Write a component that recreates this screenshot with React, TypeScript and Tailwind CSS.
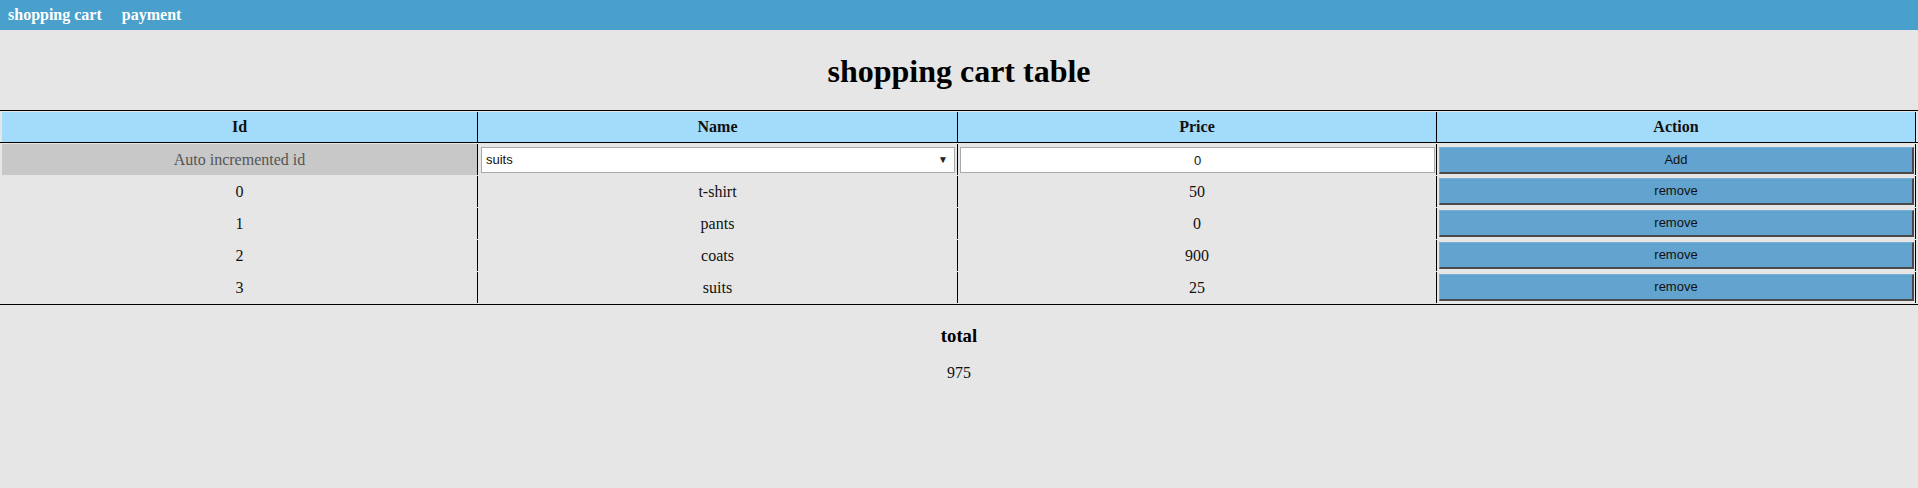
import React from "react";

const rows = [
  { id: 0, name: "t-shirt", price: 50 },
  { id: 1, name: "pants", price: 0 },
  { id: 2, name: "coats", price: 900 },
  { id: 3, name: "suits", price: 25 },
];

function ActionButton({ label }: { label: string }) {
  return (
    <button
      type="button"
      className="block w-full h-[27px] pb-[2px] bg-[#62a4cf] border-t border-l border-t-[#78b2d8] border-l-[#78b2d8] border-r-2 border-b-2 border-r-[#4a4a4a] border-b-[#4a4a4a] text-[13px] leading-[15px] text-[#111] font-['Liberation_Sans',Arial,sans-serif]"
    >
      {label}
    </button>
  );
}

const cols = "grid grid-cols-[476px_480px_479px_479px]";

export default function App() {
  return (
    <div className="min-h-screen bg-[#e6e6e6] font-['Liberation_Serif','Times_New_Roman',serif] text-[#111]">
      <nav className="h-[30px] bg-[#4aa0cc] flex items-center pl-2 gap-[20px] text-white font-bold text-[16px]">
        <a href="#" className="text-white">shopping cart</a>
        <a href="#" className="text-white">payment</a>
      </nav>

      <div className="h-[80px] flex items-center justify-center pt-[2px]">
        <h1 className="text-[32px] font-bold leading-[37px] text-black">shopping cart table</h1>
      </div>

      <div className="border-t border-b border-black">
        <div className="pt-px border-b border-black">
          <div className={`${cols} pl-[2px] h-[30px] text-[16px] font-bold`}>
            {["Id", "Name", "Price", "Action"].map((h) => (
              <div key={h} className="bg-[#a3dbfb] border-r border-black flex items-center justify-center">
                {h}
              </div>
            ))}
          </div>
        </div>

        <div className="pt-px pl-[2px] text-[16px]">
          <div className={`${cols} h-[31px] mb-px`}>
            <div className="bg-[#c8c8c8] text-[#555] border-r border-black flex items-center justify-center">
              Auto incremented id
            </div>
            <div className="border-r border-black pl-[3px] pr-[2px] pt-[3px]">
              <div className="relative">
                <select
                  defaultValue="suits"
                  className="appearance-none block w-full h-[26px] bg-white border border-[#a9a9a9] pl-[4px] text-[13px] text-[#111] font-['Liberation_Sans',Arial,sans-serif] outline-none"
                >
                  <option value="t-shirt">t-shirt</option>
                  <option value="pants">pants</option>
                  <option value="coats">coats</option>
                  <option value="suits">suits</option>
                </select>
                <span className="absolute right-[7px] top-[7px] text-[10px] leading-[12px] text-[#222] pointer-events-none">▼</span>
              </div>
            </div>
            <div className="border-r border-black pl-[2px] pr-px pt-[3px]">
              <input
                type="text"
                defaultValue="0"
                className="block w-full h-[26px] bg-white border border-[#a9a9a9] text-center text-[13px] text-[#111] font-['Liberation_Sans',Arial,sans-serif] outline-none"
              />
            </div>
            <div className="border-r border-black pl-[2px] pr-px pt-[3px]">
              <ActionButton label="Add" />
            </div>
          </div>

          {rows.map((r) => (
            <div key={r.id} className={`${cols} h-[31px] mb-px`}>
              <div className="border-r border-black flex items-center justify-center">{r.id}</div>
              <div className="border-r border-black flex items-center justify-center">{r.name}</div>
              <div className="border-r border-black flex items-center justify-center">{r.price}</div>
              <div className="border-r border-black pl-[2px] pr-px pt-[2px]">
                <ActionButton label="remove" />
              </div>
            </div>
          ))}
        </div>
      </div>

      <div className="pt-[20px] text-center">
        <h3 className="text-[18.72px] leading-[22px] font-bold text-black">total</h3>
        <p className="mt-[17px] text-[16px] leading-[18px]">975</p>
      </div>
    </div>
  );
}
